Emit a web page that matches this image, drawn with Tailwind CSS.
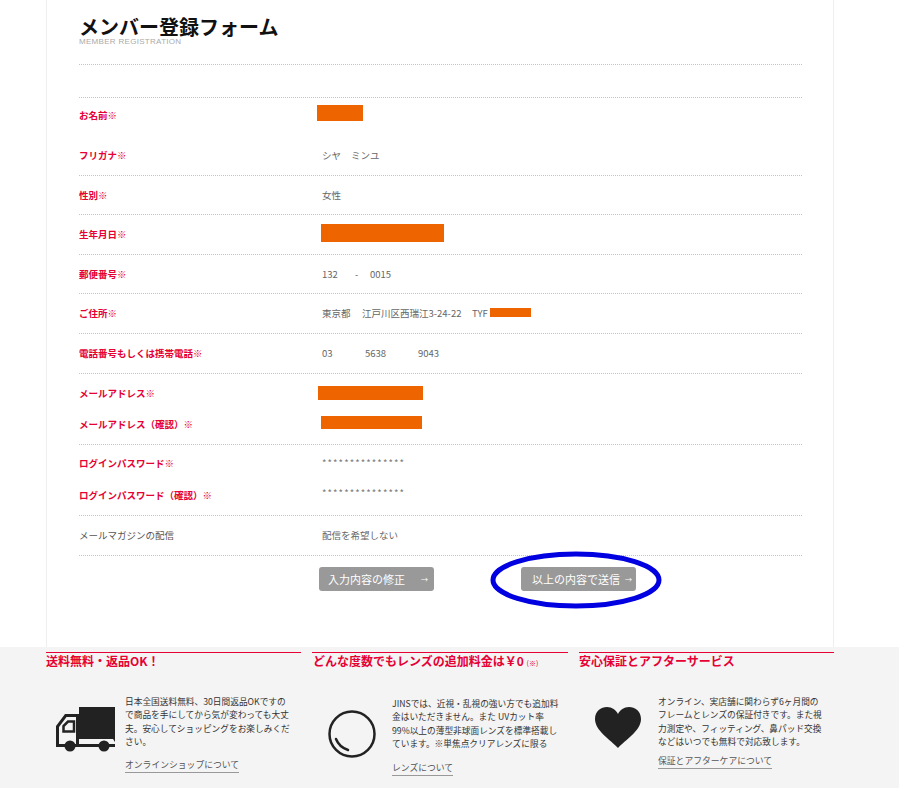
<!DOCTYPE html>
<html lang="ja">
<head>
<meta charset="utf-8">
<script src="https://cdn.jsdelivr.net/npm/@tailwindcss/browser@4"></script>
</head>
<body class="bg-white font-['Noto_Sans_CJK_JP','Noto_Sans',sans-serif] overflow-hidden">
<div class="relative w-[899px] h-[788px] overflow-hidden">
  <main class="ml-[46px] w-[788px] h-[647px] border-x border-[#eeeeee] pl-[32px] pr-[31px]">
    <header class="h-[65px] pt-[16px] border-b border-dotted border-[#c4c4c4]">
      <h1 class="text-[20px] leading-[22px] font-bold text-[#111]">メンバー登録フォーム</h1>
      <p class="font-['Liberation_Sans'] text-[8px] leading-[7px] tracking-[0.3px] text-[#aaaaaa]">MEMBER REGISTRATION</p>
    </header>
    <div class="h-[33px] border-b border-dotted border-[#c4c4c4]"></div>

    <section class="border-b border-dotted border-[#c4c4c4]">
      <div class="relative flex items-center h-[38px] text-[9.5px]">
        <span class="w-[243px] -mt-[4px] font-bold text-[#e60033]">お名前<span class="font-normal">※</span></span>
        <span class="absolute left-[238px] top-[7px] w-[46px] h-[16px] bg-[#ee6500]"></span>
      </div>
      <div class="flex items-center h-[39px] text-[9.5px]">
        <span class="w-[243px] font-bold text-[#e60033]">フリガナ<span class="font-normal">※</span></span>
        <span class="text-[#666]">シヤ<span class="ml-[10px]">ミンユ</span></span>
      </div>
    </section>

    <section class="flex items-center h-[39px] text-[9.5px] border-b border-dotted border-[#c4c4c4]">
      <span class="w-[243px] font-bold text-[#e60033]">性別<span class="font-normal">※</span></span>
      <span class="text-[#666]">女性</span>
    </section>

    <section class="relative flex items-center h-[40px] text-[9.5px] border-b border-dotted border-[#c4c4c4]">
      <span class="w-[243px] font-bold text-[#e60033]">生年月日<span class="font-normal">※</span></span>
      <span class="absolute left-[242px] top-[9px] w-[123px] h-[18px] bg-[#ee6500]"></span>
    </section>

    <section class="flex items-center h-[39px] text-[9.5px] border-b border-dotted border-[#c4c4c4]">
      <span class="w-[243px] font-bold text-[#e60033]">郵便番号<span class="font-normal">※</span></span>
      <span class="text-[#666] flex"><span class="w-[33px]">132</span><span class="w-[15px]">-</span><span>0015</span></span>
    </section>

    <section class="relative flex items-center h-[40px] text-[9.5px] border-b border-dotted border-[#c4c4c4]">
      <span class="w-[243px] font-bold text-[#e60033]">ご住所<span class="font-normal">※</span></span>
      <span class="text-[#666] flex"><span class="w-[40px]">東京都</span><span class="w-[110px]">江戸川区西瑞江3-24-22</span><span>TYF</span></span>
      <span class="absolute left-[411px] top-[14px] w-[41px] h-[9px] bg-[#ee6500]"></span>
    </section>

    <section class="flex items-center h-[40px] text-[9.5px] border-b border-dotted border-[#c4c4c4]">
      <span class="w-[243px] font-bold text-[#e60033]">電話番号もしくは携帯電話<span class="font-normal">※</span></span>
      <span class="text-[#666] flex"><span class="w-[43px]">03</span><span class="w-[53px]">5638</span><span>9043</span></span>
    </section>

    <section class="border-b border-dotted border-[#c4c4c4]">
      <div class="relative flex items-center h-[38px] text-[9.5px]">
        <span class="w-[243px] font-bold text-[#e60033]">メールアドレス<span class="font-normal">※</span></span>
        <span class="absolute left-[239px] top-[12px] w-[105px] h-[14px] bg-[#ee6500]"></span>
      </div>
      <div class="relative flex items-center h-[32px] text-[9.5px]">
        <span class="w-[243px] -mt-[8px] font-bold text-[#e60033]">メールアドレス（確認）<span class="font-normal">※</span></span>
        <span class="absolute left-[242px] top-[4px] w-[101px] h-[13px] bg-[#ee6500]"></span>
      </div>
    </section>

    <section class="border-b border-dotted border-[#c4c4c4]">
      <div class="flex items-center h-[37px] text-[9.5px]">
        <span class="w-[243px] font-bold text-[#e60033]">ログインパスワード<span class="font-normal">※</span></span>
        <span class="text-[#777] tracking-[1.1px]">***************</span>
      </div>
      <div class="flex items-center h-[33px] text-[9.5px]">
        <span class="w-[243px] -mt-[6px] font-bold text-[#e60033]">ログインパスワード（確認）<span class="font-normal">※</span></span>
        <span class="text-[#777] -mt-[10px] tracking-[1.1px]">***************</span>
      </div>
    </section>

    <section class="flex items-center h-[40px] text-[9.5px] border-b border-dotted border-[#c4c4c4]">
      <span class="w-[243px] text-[#555]">メールマガジンの配信</span>
      <span class="text-[#666]">配信を希望しない</span>
    </section>

    <div class="flex pl-[240px] pt-[11px] text-[11px] text-white">
      <a class="flex items-center justify-between w-[115px] h-[24px] pl-[9px] pr-[6px] bg-[#999999] rounded-[3px]"><span>入力内容の修正</span><span class="text-[7px]">→</span></a>
      <a class="flex items-center justify-between w-[115px] h-[24px] ml-[87px] pl-[11px] pr-[4px] bg-[#999999] rounded-[3px]"><span>以上の内容で送信</span><span class="text-[7px]">→</span></a>
    </div>
  </main>

  <svg class="absolute left-[490px] top-[551px]" width="172" height="58" viewBox="0 0 172 58" fill="none">
    <ellipse cx="86" cy="29" rx="83" ry="26" stroke="#0000e0" stroke-width="5"/>
  </svg>

  <footer class="h-[141px] bg-[#f4f4f4] pl-[46px] pt-[5px] grid grid-cols-[255px_256px_255px] gap-x-[11px] text-[8.7px] leading-[13.4px] text-[#333]">
    <article class="border-t border-[#e60033]">
      <h2 class="text-[12px] leading-[16px] font-bold text-[#e60033]">送料無料・返品OK！</h2>
      <div class="flex pt-[26px]">
        <div class="w-[79px] pl-[10px] pt-[12px] shrink-0">
          <svg width="59" height="45" viewBox="0 0 59 45" fill="#222222">
            <rect x="23" y="0" width="36" height="32"/>
            <path d="M0 40V19L9 7H23V37H59V40ZM3 20V37H20V10H10.500Z" fill-rule="evenodd"/>
            <path d="M7.500 24.500V19L12 14.500H18V24.500Z" fill="none" stroke="#222222" stroke-width="2.500"/>
            <path d="M57 32H59V35Z"/>
            <circle cx="14" cy="39" r="5.500"/>
            <circle cx="48" cy="39" r="5.500"/>
          </svg>
        </div>
        <div>
          <p class="w-[172px] whitespace-nowrap">日本全国送料無料、30日間返品OKですの<br>で商品を手にしてから気が変わっても大丈<br>夫。安心してショッピングをお楽しみくだ<br>さい。</p>
          <a class="inline-block mt-[9px] pb-[1px] border-b border-[#999999] text-[#555] text-[8.800px]">オンラインショップについて</a>
        </div>
      </div>
    </article>
    <article class="border-t border-[#e60033]">
      <h2 class="text-[12px] leading-[16px] font-bold text-[#e60033] pl-[1px] whitespace-nowrap">どんな度数でもレンズの追加料金は￥0 <span class="text-[7px] font-normal">(※)</span></h2>
      <div class="flex pt-[26px]">
        <div class="w-[80px] pl-[16px] pt-[13px] shrink-0">
          <svg width="48" height="48" viewBox="0 0 48 48" fill="none" stroke="#222222" stroke-linecap="round">
            <circle cx="24" cy="24" r="22.500" stroke-width="2.500"/>
            <path d="M8 29C10 34 14 38 20 40" stroke-width="2.500"/>
          </svg>
        </div>
        <div>
          <p class="w-[172px] whitespace-nowrap">JINSでは、近視・乱視の強い方でも追加料<br>金はいただきません。また UVカット率<br>99%以上の薄型非球面レンズを標準搭載し<br>ています。※単焦点クリアレンズに限る</p>
          <a class="inline-block mt-[10px] pb-[1px] border-b border-[#999999] text-[#555] text-[8.800px]">レンズについて</a>
        </div>
      </div>
    </article>
    <article class="border-t border-[#e60033]">
      <h2 class="text-[12px] leading-[16px] font-bold text-[#e60033] whitespace-nowrap">安心保証とアフターサービス</h2>
      <div class="flex pt-[26px]">
        <div class="w-[79px] pl-[16px] pt-[12px] shrink-0">
          <svg width="46" height="41" viewBox="0 0 46 41" fill="#222222">
            <path d="M23 41C16 33 0 24 0 12C0 4 6 0 12 0C17 0 21 3 23 7C25 3 29 0 34 0C40 0 46 4 46 12C46 24 30 33 23 41Z"/>
          </svg>
        </div>
        <div>
          <p class="w-[172px] whitespace-nowrap">オンライン、実店舗に関わらず6ヶ月間の<br>フレームとレンズの保証付きです。また視<br>力測定や、フィッティング、鼻パッド交換<br>などはいつでも無料で対応致します。</p>
          <a class="inline-block mt-[5px] pb-[1px] border-b border-[#999999] text-[#555] text-[8.800px]">保証とアフターケアについて</a>
        </div>
      </div>
    </article>
  </footer>
</div>
</body>
</html>
